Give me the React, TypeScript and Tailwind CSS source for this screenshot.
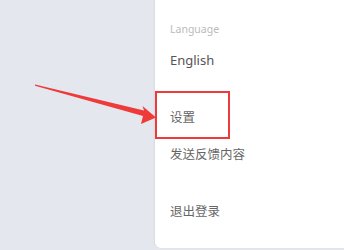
import React from "react";

export default function App() {
  const font = { fontFamily: '"Noto Sans", "Noto Sans CJK SC", sans-serif' };
  return (
    <div className="relative w-[344px] h-[250px] overflow-hidden bg-[#e4e7ee] flex" style={font}>
      <div className="flex-1" />
      <div className="w-[189px] h-[248px] bg-white rounded-bl-md shadow-[-1px_0_2px_rgba(0,0,0,0.06)] flex flex-col pl-[15px] text-[#666]">
        <div className="mt-[22px] text-[10.5px] leading-[14px] text-[#bbb]">Language</div>
        <div className="mt-[15px] text-[13px] leading-[18px] text-[#555]">English</div>
        <div className="mt-[40px] text-[12.5px] leading-[18px]">设置</div>
        <div className="mt-[19px] text-[12.5px] leading-[18px]">发送反馈内容</div>
        <div className="mt-[39px] text-[12.5px] leading-[18px]">退出登录</div>
      </div>
      <div className="absolute left-[155px] top-[91px] w-[75px] h-[48px] border-2 border-[#ec3b3b]" />
      <svg className="absolute left-0 top-0" width="344" height="250" viewBox="0 0 344 250">
        <polygon
          points="35,84.5 144,110.5 142.5,106 156,117.5 141,124 143,116 35,85.8"
          fill="#ef3a3a"
        />
      </svg>
    </div>
  );
}
